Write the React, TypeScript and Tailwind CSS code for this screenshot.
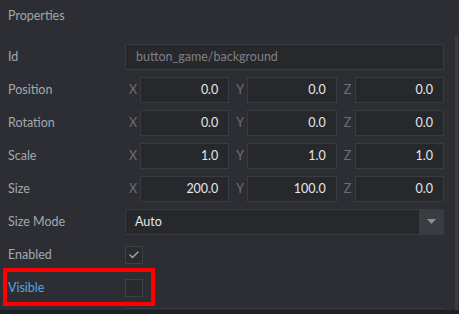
import { Check } from 'lucide-react';

type Vec = { label: string; values: string[] };

const vectors: Vec[] = [
  { label: 'Position', values: ['0.0', '0.0', '0.0'] },
  { label: 'Rotation', values: ['0.0', '0.0', '0.0'] },
  { label: 'Scale', values: ['1.0', '1.0', '1.0'] },
  { label: 'Size', values: ['200.0', '100.0', '0.0'] },
];

const axes = ['X', 'Y', 'Z'];

function Row({ label, highlight, children }: { label: string; highlight?: boolean; children: React.ReactNode }) {
  return (
    <div className="flex items-center h-[33px] shrink-0">
      <div className={`w-[125px] pl-2 ${highlight ? 'text-[#5aa6e4]' : 'text-[#a3a8af]'}`}>{label}</div>
      <div className="w-[319px] flex items-center">{children}</div>
    </div>
  );
}

export default function App() {
  return (
    <div
      className="relative w-[459px] h-[314px] overflow-hidden bg-[#2d2e33] text-[12.5px] leading-4"
      style={{ fontFamily: 'Lato, "Open Sans", sans-serif' }}
    >
      <div className="h-[310px] flex flex-col overflow-hidden">
        {/* Header */}
        <div className="h-[40px] shrink-0 pl-2 pt-[8px] text-[#a3a8af]">Properties</div>

        <Row label="Id">
          <div className="w-full h-[26px] flex items-center pl-[10px] bg-[#27282c] border border-[#3a3b40] text-[#7d8086]">
            button_game/background
          </div>
        </Row>

        {vectors.map(v => (
          <Row key={v.label} label={v.label}>
            <div className="w-full grid grid-cols-3 gap-[3px]">
              {v.values.map((val, i) => (
                <div key={i} className="flex items-center">
                  <span className="w-[15px] shrink-0 text-[#6c6f75] pl-[4px]">{axes[i]}</span>
                  <div className="flex-1 h-[26px] flex items-center justify-end pr-[10px] bg-[#27282c] border border-[#3a3b40] text-[#e4e6e8]">
                    {val}
                  </div>
                </div>
              ))}
            </div>
          </Row>
        ))}

        <Row label="Size Mode">
          <div className="w-full h-[26px] flex items-stretch bg-[#27282c] border border-[#3a3b40]">
            <div className="flex-1 flex items-center pl-[9px] text-[#e4e6e8]">Auto</div>
            <div className="w-[24px] bg-[#3a3c41] flex items-center justify-center">
              <svg width="9" height="5" viewBox="0 0 9 5">
                <path d="M0 0 H9 L4.5 5 Z" fill="#8b8e93" />
              </svg>
            </div>
          </div>
        </Row>

        <Row label="Enabled">
          <div className="w-[18px] h-[18px] border border-[#3f4045] bg-[#2a2b2f] flex items-center justify-center">
            <Check size={12} strokeWidth={3} className="text-[#9fa4aa]" />
          </div>
        </Row>

        <Row label="Visible" highlight>
          <div className="w-[18px] h-[18px] border border-[#3f4045] bg-[#2a2b2f]" />
        </Row>

        <Row label="">
          <div className="w-full h-[26px] bg-[#27282c] border border-[#3a3b40]" />
        </Row>
      </div>

      {/* bottom bar */}
      <div className="h-[4px] bg-[#1f2023]" />

      {/* scrollbar */}
      <div className="absolute right-[1px] top-[36px] w-[3px] h-[274px] bg-[#3b3c41]" />

      {/* annotation */}
      <div className="absolute left-[3px] top-[268px] w-[152px] h-[38px] border-4 border-[#ff0000]" />
    </div>
  );
}
